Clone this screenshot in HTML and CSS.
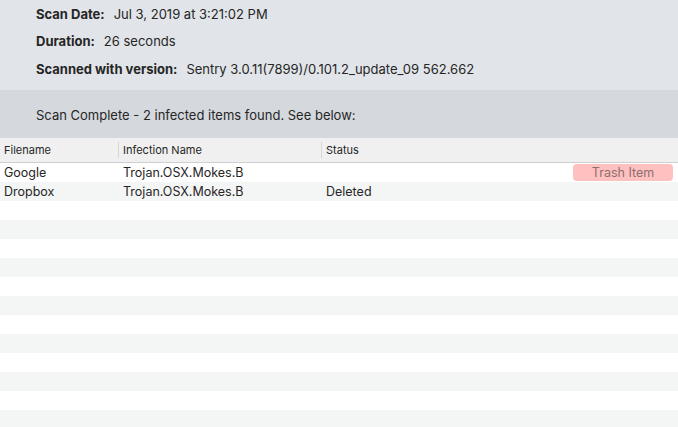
FILE: index.html
```html
<!DOCTYPE html>
<html>
<head>
<meta charset="utf-8">
<link rel="stylesheet" href="styles.css">
</head>
<body>
<div class="info">
  <div class="line"><span class="label">Scan Date:</span><span class="value">Jul 3, 2019 at 3:21:02 PM</span></div>
  <div class="line"><span class="label">Duration:</span><span class="value">26 seconds</span></div>
  <div class="line"><span class="label">Scanned with version:</span><span class="value">Sentry 3.0.11(7899)/0.101.2_update_09 562.662</span></div>
</div>
<div class="summary">Scan Complete - 2 infected items found. See below:</div>
<div class="table">
  <div class="thead">
    <div class="th c1">Filename</div>
    <div class="th c2">Infection Name</div>
    <div class="th c3">Status</div>
  </div>
  <div class="row">
    <div class="td c1">Google</div>
    <div class="td c2">Trojan.OSX.Mokes.B</div>
    <div class="td c3 action"><span class="btn">Trash Item</span></div>
  </div>
  <div class="row">
    <div class="td c1">Dropbox</div>
    <div class="td c2">Trojan.OSX.Mokes.B</div>
    <div class="td c3">Deleted</div>
  </div>
  <div class="row"></div>
  <div class="row"></div>
  <div class="row"></div>
  <div class="row"></div>
  <div class="row"></div>
  <div class="row"></div>
  <div class="row"></div>
  <div class="row"></div>
  <div class="row"></div>
  <div class="row"></div>
  <div class="row"></div>
  <div class="row"></div>
</div>
</body>
</html>
```
FILE: styles.css
```css
* { box-sizing: border-box; }
html, body { margin: 0; padding: 0; }
body {
  width: 678px;
  height: 427px;
  overflow: hidden;
  background: #ffffff;
  font-family: Inter, "Liberation Sans", sans-serif;
  color: #262626;
}
.info {
  background: #e1e4e8;
  height: 90px;
  padding: 0 0 0 36px;
  display: flex;
  flex-direction: column;
}
.line {
  height: 27.5px;
  flex: none;
  display: flex;
  align-items: center;
  font-size: 13px;
}
.label { font-weight: 700; margin-right: 9px; }
.summary {
  background: #d5d8dc;
  height: 48px;
  padding: 1px 0 0 36px;
  display: flex;
  align-items: center;
  font-size: 13px;
  color: #262626;
}
.thead {
  height: 25px;
  background: #f0f0f0;
  border-bottom: 1px solid #cfcfcf;
  display: flex;
  align-items: center;
  font-size: 11px;
}
.th {
  height: 16px;
  display: flex;
  align-items: center;
  padding-left: 4px;
}
.th.c2, .th.c3 { border-left: 1px solid #d8d8d8; }
.c1 { width: 118px; }
.c2 { width: 203px; }
.c3 { flex: 1; }
.row {
  height: 19px;
  display: flex;
  align-items: center;
  font-size: 12.5px;
}
.row:nth-child(odd) { background: #f4f5f5; }
.td { padding-left: 4px; white-space: nowrap; }
.td.c2 { padding-left: 5px; }
.td.c3 { padding-left: 5px; }
.action { display: flex; justify-content: flex-end; padding-right: 5px; }
.btn {
  width: 100px;
  height: 17px;
  border-radius: 4px;
  background: #ffc0c0;
  color: #8c6f70;
  display: flex;
  align-items: center;
  justify-content: center;
  font-size: 12.5px;
}
```
